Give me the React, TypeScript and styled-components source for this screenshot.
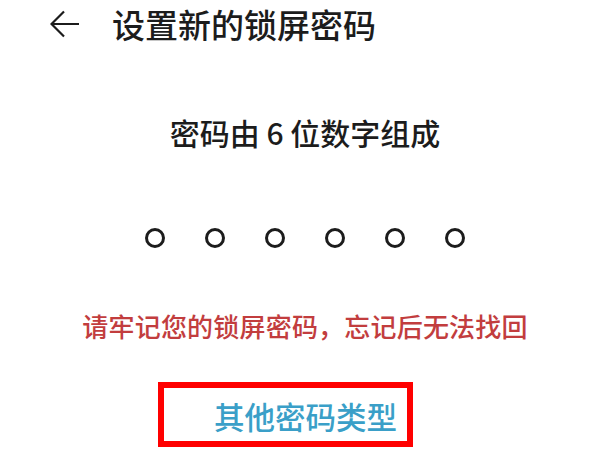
import React from "react";
import styled, { createGlobalStyle } from "styled-components";

const GlobalStyle = createGlobalStyle`
  html, body {
    margin: 0;
    padding: 0;
    background: #ffffff;
  }
  body {
    font-family: "Noto Sans CJK SC", "Noto Sans", sans-serif;
    color: #1c1c1c;
  }
`;

const Page = styled.div`
  width: 600px;
  height: 450px;
  overflow: hidden;
  display: flex;
  flex-direction: column;
`;

const Header = styled.header`
  height: 48px;
  display: flex;
  align-items: center;
  padding-left: 50px;
  gap: 32px;
`;

const BackButton = styled.button`
  border: none;
  background: none;
  padding: 0;
  width: 30px;
  height: 28px;
  display: flex;
  color: #1c1c1c;
`;

const Title = styled.h1`
  margin: 0;
  font-size: 33px;
  font-weight: 500;
  line-height: 1;
`;

const Body = styled.main`
  display: flex;
  flex-direction: column;
  align-items: center;
  padding-left: 10px;
`;

const Hint = styled.p`
  margin: 66px 0 0;
  font-size: 30px;
  line-height: 36px;
  font-weight: 500;
`;

const Dots = styled.div`
  margin-top: 78px;
  display: flex;
  gap: 40px;
`;

const Dot = styled.span<{ $filled?: boolean }>`
  width: 20px;
  height: 20px;
  box-sizing: border-box;
  border-radius: 50%;
  border: 3px solid #1c1c1c;
  background: ${(p) => (p.$filled ? "#1c1c1c" : "transparent")};
`;

const Warning = styled.p`
  margin: 62px 0 0;
  font-size: 26px;
  line-height: 32px;
  font-weight: 500;
  letter-spacing: 0.2px;
  color: #c23d3e;
`;

const Highlight = styled.div`
  margin-top: 40px;
  margin-right: 39px;
  box-sizing: border-box;
  width: 255px;
  height: 65px;
  border: 6px solid #ff0000;
  display: flex;
  align-items: center;
  padding: 4px 0 0 50px;
`;

const LinkButton = styled.button`
  border: none;
  background: none;
  padding: 0;
  font-family: inherit;
  font-size: 30.5px;
  font-weight: 500;
  line-height: 1;
  color: #3a9fc8;
  cursor: pointer;
`;

export default function App() {
  const digits = [false, false, false, false, false, false];
  return (
    <Page>
      <GlobalStyle />
      <Header>
        <BackButton aria-label="返回">
          <svg width="30" height="28" viewBox="0 0 30 28" fill="none">
            <path
              d="M29 14H2M14 1.5L1.5 14 14 26.5"
              stroke="currentColor"
              strokeWidth="2.2"
            />
          </svg>
        </BackButton>
        <Title>设置新的锁屏密码</Title>
      </Header>
      <Body>
        <Hint>密码由 6 位数字组成</Hint>
        <Dots>
          {digits.map((f, i) => (
            <Dot key={i} $filled={f} />
          ))}
        </Dots>
        <Warning>请牢记您的锁屏密码，忘记后无法找回</Warning>
        <Highlight>
          <LinkButton>其他密码类型</LinkButton>
        </Highlight>
      </Body>
    </Page>
  );
}
